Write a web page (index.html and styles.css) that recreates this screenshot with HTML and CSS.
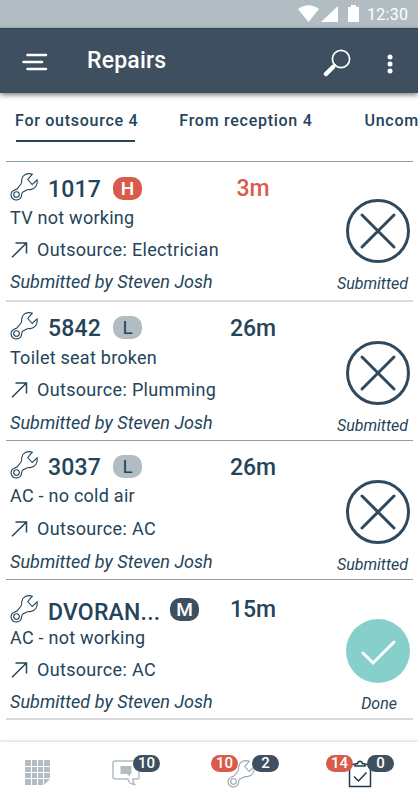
FILE: index.html
```html
<!DOCTYPE html>
<html lang="en">
  <head>
    <meta charset="UTF-8" />
    <meta name="viewport" content="width=device-width, initial-scale=1.0" />
    <title>Repairs</title>
    <link rel="stylesheet" href="styles.css">
  </head>
  <body>
    <!-- shared icons -->
    <svg class="sprite" xmlns="http://www.w3.org/2000/svg">
      <symbol id="wrench" viewBox="0 0 28 28">
        <path d="M22.300 1.200C17-.6 12.400 2.200 11.800 6.400c-.3 2.300.2 3.200-.8 4.600l-3.700 4.600c-.8 1-1.700.9-2.700 1.300C2.200 17.900.8 20 1.100 22.400c.4 3 3.100 5 6 4.500 2.800-.4 4.400-2.600 4.600-5.200.1-1.300.2-2 1.200-2.700l4-2.100c1.200-.6 2.200-.2 3.500-.3 4.600-.3 7.500-4.600 6.700-9.800L22.200 11.500l-4.400-5z" />
        <circle cx="6.500" cy="21.500" r="2.800" />
      </symbol>
      <symbol id="arrow" viewBox="0 0 17 16">
        <path d="M1 15.300 15.500 1M4.500 1h11v10.500" />
      </symbol>
      <symbol id="cross" viewBox="0 0 64 64">
        <circle cx="32" cy="32" r="30.500" />
        <path d="M16 16l32 32M48 16L16 48" />
      </symbol>
      <symbol id="done" viewBox="0 0 64 64">
        <path d="M17 34l10 10L48 23" />
      </symbol>
    </svg>

    <div class="phone">
      <div class="status-bar">
        <svg class="signals" width="61" height="17" viewBox="0 0 61 17">
          <path d="M0 4Q10.500-3.500 21 4L10.500 17zM40 1v16H23zM50 2h3V0h5v2h3v15H50z" />
        </svg>
        <span class="clock">12:30</span>
      </div>

      <header class="header">
        <svg class="menu" width="26" height="19" viewBox="0 0 26 19">
          <path d="M5.500 2H24M1.500 9H20M5.500 16H24" />
        </svg>
        <h1 class="title">Repairs</h1>
        <svg class="search" width="28" height="28" viewBox="0 0 28 28">
          <circle cx="18" cy="10" r="8.600" />
          <path d="M3 25l7-7" />
          <path class="thin" d="M9.500 18.500l2.700-2.700" />
        </svg>
        <svg class="more" width="6" height="20" viewBox="0 0 6 20">
          <circle cx="3" cy="3" r="2.500" />
          <circle cx="3" cy="10" r="2.500" />
          <circle cx="3" cy="17" r="2.500" />
        </svg>
      </header>

      <nav class="tabs">
        <span class="tab active">For outsource 4</span>
        <span class="tab">From reception 4</span>
        <span class="tab">Uncom</span>
      </nav>

      <main class="list">
        <article class="card">
          <div class="info">
            <div class="room">
              <svg class="wrench"><use href="#wrench" /></svg>
              <span class="number">1017</span>
              <span class="badge high">H</span>
            </div>
            <p class="problem">TV not working</p>
            <p class="outsource"><svg class="arrow"><use href="#arrow" /></svg>Outsource: Electrician</p>
            <p class="author">Submitted by Steven Josh</p>
          </div>
          <span class="time late">3m</span>
          <div class="state">
            <svg class="circle"><use href="#cross" /></svg>
            <span class="label">Submitted</span>
          </div>
        </article>

        <article class="card">
          <div class="info">
            <div class="room">
              <svg class="wrench"><use href="#wrench" /></svg>
              <span class="number">5842</span>
              <span class="badge">L</span>
            </div>
            <p class="problem">Toilet seat broken</p>
            <p class="outsource"><svg class="arrow"><use href="#arrow" /></svg>Outsource: Plumming</p>
            <p class="author">Submitted by Steven Josh</p>
          </div>
          <span class="time">26m</span>
          <div class="state">
            <svg class="circle"><use href="#cross" /></svg>
            <span class="label">Submitted</span>
          </div>
        </article>

        <article class="card">
          <div class="info">
            <div class="room">
              <svg class="wrench"><use href="#wrench" /></svg>
              <span class="number">3037</span>
              <span class="badge">L</span>
            </div>
            <p class="problem">AC - no cold air</p>
            <p class="outsource"><svg class="arrow"><use href="#arrow" /></svg>Outsource: AC</p>
            <p class="author">Submitted by Steven Josh</p>
          </div>
          <span class="time">26m</span>
          <div class="state">
            <svg class="circle"><use href="#cross" /></svg>
            <span class="label">Submitted</span>
          </div>
        </article>

        <article class="card">
          <div class="info">
            <div class="room">
              <svg class="wrench"><use href="#wrench" /></svg>
              <span class="number name">DVORAN...</span>
              <span class="badge medium">M</span>
            </div>
            <p class="problem">AC - not working</p>
            <p class="outsource"><svg class="arrow"><use href="#arrow" /></svg>Outsource: AC</p>
            <p class="author">Submitted by Steven Josh</p>
          </div>
          <span class="time">15m</span>
          <div class="state">
            <svg class="circle ok"><use href="#done" /></svg>
            <span class="label">Done</span>
          </div>
        </article>
      </main>

      <footer class="bottom-bar">
        <div class="item calendar">
          <svg width="25" height="25" viewBox="0 0 25 25">
            <path fill="#b2bdc3" d="M0 0h25v19l-6 6H0z" />
            <path stroke="#fff" d="M6.500 0v25M12.500 0v25M18.500 0v25M0 6.500h25M0 12.500h25M0 18.500h25" />
          </svg>
        </div>
        <div class="item messages">
          <svg width="28" height="26" viewBox="0 0 28 26" fill="none" stroke="#b2bdc3" stroke-width="1.500">
            <path d="M3 1h22q2 0 2 2v14q0 2-2 2h-4q-.5 3.500 1.500 5.500-6-.5-6.500-5.500H3q-2 0-2-2V3q0-2 2-2z" />
            <path fill="#b2bdc3" stroke="none" d="M8.500 6h11v8h-1.500v2.500L15 14H8.500z" />
          </svg>
          <span class="count right">10</span>
        </div>
        <div class="item repairs">
          <svg class="wrench"><use href="#wrench" /></svg>
          <span class="count left">10</span>
          <span class="count right">2</span>
        </div>
        <div class="item tasks">
          <svg width="24" height="28" viewBox="0 0 24 28" fill="none" stroke="#1d3c50" stroke-width="1.500">
            <path d="M6 4.500H1.500V26.500h21V4.500H18" />
            <path d="M7 6V3.800h2.500q.3-2.600 2.500-2.600t2.500 2.600H17V6z" />
            <path d="M6 16.500l4.500 4.500 8-8.500" />
          </svg>
          <span class="count left">14</span>
          <span class="count right">0</span>
        </div>
      </footer>
    </div>
  </body>
</html>
```
FILE: styles.css
```css
:root {
  --dark: #3e505f;
  --text: #24445a;
  --grey: #b2bdc3;
  --red: #d95b4b;
  --teal: #87cfca;
}
* {
  box-sizing: border-box;
  margin: 0;
}
body {
  font-family: Roboto, sans-serif;
  color: var(--text);
  background: #fff;
}
svg {
  display: block;
  flex-shrink: 0;
}
.sprite {
  display: none;
}
.phone {
  height: 800px;
  overflow: hidden;
  display: flex;
  flex-direction: column;
}

.status-bar {
  height: 28px;
  flex-shrink: 0;
  background: var(--grey);
  display: flex;
  justify-content: flex-end;
  padding: 5px 9px 0 0;
}
.signals {
  fill: #fff;
  margin-right: 8px;
}
.clock {
  width: 42px;
  color: #fff;
  font-size: 16px;
  line-height: 19px;
  letter-spacing: 0.3px;
}

.header {
  height: 65px;
  flex-shrink: 0;
  display: flex;
  align-items: flex-start;
  background: var(--dark);
  border-top: 1px solid #2a4355;
  box-shadow: 0 2px 5px rgba(0, 0, 0, 0.5);
  padding: 0 25px 0 22px;
}
.menu {
  margin-top: 24px;
  stroke: #fff;
  stroke-width: 2.5;
  stroke-linecap: round;
}
.title {
  margin: 17px auto 0 39px;
  color: #fff;
  font-size: 23px;
  font-weight: 500;
  line-height: 30px;
  letter-spacing: 0.2px;
}
.search {
  margin-top: 20px;
  fill: none;
  stroke: #fff;
  stroke-width: 4.5;
  stroke-linecap: round;
}
.search circle,
.search .thin {
  stroke-width: 1.7;
}
.more {
  margin: 25px 0 0 36px;
  fill: #fff;
}

.tabs {
  height: 68px;
  flex-shrink: 0;
  display: flex;
  align-items: flex-start;
  gap: 41px;
  padding: 16px 0 0 15px;
  white-space: nowrap;
}
.tab {
  font-size: 16px;
  font-weight: 500;
  line-height: 24px;
  letter-spacing: 0.73px;
  height: 33px;
}
.tab:last-child {
  margin-left: 11px;
}
.active {
  background: linear-gradient(#24445a, #24445a) 1px 100% / 119px 2px no-repeat;
}

.list {
  height: 581px;
  flex-shrink: 0;
  margin: 0 5px 0 6px;
  border-top: 1px solid #929ea5;
}
.card {
  /* vertical rhythm of a card, corrected below for single rows */
  --room: 13px;
  --time: 12px;
  --problem: 3px;
  --outsource: 8px;
  --author: 8px;
  --state: 39px;
  height: 139px;
  display: flex;
  align-items: flex-start;
  border-bottom: 1px solid #929ea5;
}
.card:nth-child(1) {
  height: 140px;
  border-bottom: 2px solid #d9d9d9;
  --state: 37px;
}
.card:nth-child(2) {
  --room: 12px;
  --problem: 4px;
  --author: 9px;
}
.card:nth-child(3) {
  --room: 12px;
  --outsource: 9px;
  --author: 9px;
}
.card:nth-child(4) {
  height: 140px;
  border-bottom: 2px solid #d9d9d9;
  --room: 17px;
  --time: 15px;
  --problem: 1px;
}
.info {
  width: 221px;
  padding-left: 4px;
  white-space: nowrap;
}
.room {
  height: 28px;
  margin-top: var(--room);
  display: flex;
  align-items: flex-start;
}
.wrench {
  width: 28px;
  height: 28px;
  fill: none;
  stroke: var(--text);
  stroke-width: 1.1;
}
.card .wrench {
  margin-top: -2px;
}
.number {
  margin-left: 10px;
  width: 65px;
  font-size: 23px;
  font-weight: 500;
  line-height: 30px;
  letter-spacing: 0.2px;
}
.name {
  width: 122px;
  padding-top: 1px;
}
.badge {
  width: 29px;
  height: 23px;
  margin-top: 2px;
  border-radius: 10px;
  background: var(--grey);
  font-size: 19px;
  line-height: 23px;
  text-align: center;
}
.high {
  background: var(--red);
  color: #fff;
  font-weight: 500;
}
.medium {
  background: var(--dark);
  color: #fff;
  font-weight: 500;
  margin-top: 1px;
}
.problem,
.outsource,
.author {
  font-size: 18px;
  line-height: 24px;
}
.problem {
  margin-top: var(--problem);
  letter-spacing: 0.25px;
}
.outsource {
  margin-top: var(--outsource);
  display: flex;
  align-items: center;
  letter-spacing: 0.32px;
}
.arrow {
  width: 17px;
  height: 16px;
  margin: 0 9px 0 1px;
  fill: none;
  stroke: var(--text);
  stroke-width: 1.5;
}
.author {
  margin-top: var(--author);
  font-style: italic;
  letter-spacing: 0.04px;
}
.time {
  width: 52px;
  margin: var(--time) 54px 0 0;
  text-align: center;
  font-size: 23px;
  font-weight: 500;
  line-height: 30px;
}
.late {
  color: var(--red);
}
.state {
  width: 80px;
  flex-shrink: 0;
  margin-top: var(--state);
  display: flex;
  flex-direction: column;
  align-items: flex-end;
  padding-right: 3px;
  font-size: 16px;
  font-style: italic;
}
.circle {
  width: 64px;
  height: 64px;
  fill: none;
  stroke: #30495c;
  stroke-width: 3;
  stroke-linecap: round;
}
.ok {
  background: var(--teal);
  border-radius: 50%;
  stroke: #fff;
}
.label {
  margin: 11px 2px 0 0;
  line-height: 20px;
}
.ok + .label {
  margin-right: 13px;
}

.bottom-bar {
  flex-grow: 1;
  display: flex;
  padding: 18px 0 0 25px;
  box-shadow: 0 -1px 3px rgba(0, 0, 0, 0.16);
}
.item {
  position: relative;
  flex-shrink: 0;
  height: 28px;
}
.calendar {
  width: 87px;
}
.messages {
  width: 115px;
}
.repairs {
  width: 121px;
}
.item .wrench {
  stroke: #98a5ae;
}
.count {
  position: absolute;
  top: -5px;
  width: 27px;
  height: 17px;
  border-radius: 9px;
  background: var(--dark);
  color: #fff;
  font-size: 15px;
  font-weight: 500;
  line-height: 17px;
  text-align: center;
}
.left {
  left: -16px;
  background: var(--red);
}
.right {
  left: 25px;
}
.messages .right {
  left: 21px;
}
.tasks .left {
  left: -22px;
}
.tasks .right {
  left: 19px;
}
```
